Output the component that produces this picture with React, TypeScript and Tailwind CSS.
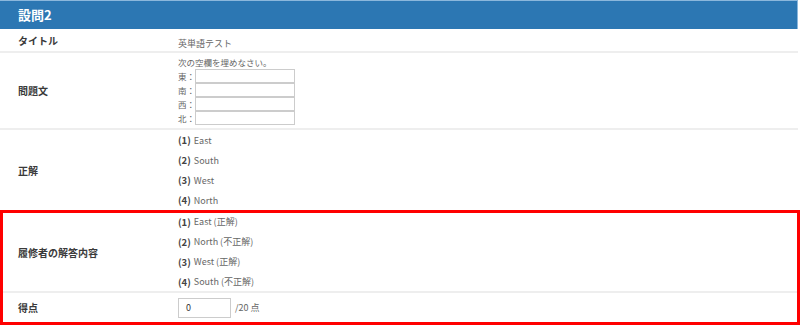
import React from "react";

const font = { fontFamily: '"Noto Sans CJK JP", "Noto Sans", sans-serif' };

function Row({ label, children, className = "", inset = false }: { label: string; children: React.ReactNode; className?: string; inset?: boolean }) {
  return (
    <div className={`flex items-center ${className}`}>
      <div
        className={`${inset ? "w-[175px] pl-[15px]" : "w-[178px] pl-[18px]"} shrink-0 text-[10px] font-bold text-[#3a3a3a]`}
      >
        {label}
      </div>
      <div className="flex-1">{children}</div>
    </div>
  );
}

function Item({ n, text }: { n: number; text: string }) {
  return (
    <div className="flex h-[20px] items-center gap-[3px] text-[9px] text-[#666]">
      <span className="text-[9.5px] font-bold text-[#444]">({n})</span>
      <span>{text}</span>
    </div>
  );
}

export default function App() {
  const blanks = ["東", "南", "西", "北"];
  return (
    <div className="h-[327px] w-[800px] overflow-hidden bg-white" style={font}>
      <div className="w-[798px]">
        <div className="flex h-[29px] items-center border-t border-r border-[#8bb7dc] bg-[#2c77b3] pl-[18px] text-[13px] font-bold text-white">
          設問2
        </div>
        <Row label="タイトル" className="h-[24px] border-b-2 border-[#eeeeee]">
          <span className="text-[9px] text-[#666]">英単語テスト</span>
        </Row>
        <Row label="問題文" className="h-[77px] border-b-2 border-[#eeeeee]">
          <div className="flex flex-col text-[8.5px] text-[#666]">
            <div className="h-[13px] leading-[13px]">次の空欄を埋めなさい。</div>
            {blanks.map((b) => (
              <div key={b} className="flex h-[14px] items-center">
                <span className="w-[17px]">{b}：</span>
                <div className="h-[14px] w-[100px] border border-[#ccc] bg-white" />
              </div>
            ))}
          </div>
        </Row>
        <Row label="正解" className="h-[80px]">
          <div className="pt-px">
            <Item n={1} text="East" />
            <Item n={2} text="South" />
            <Item n={3} text="West" />
            <Item n={4} text="North" />
          </div>
        </Row>
      </div>
      <div className="w-[800px] border-[3px] border-[#ff0000]">
        <Row inset label="履修者の解答内容" className="h-[80px] border-b-2 border-[#eeeeee]">
          <div>
            <Item n={1} text="East (正解)" />
            <Item n={2} text="North (不正解)" />
            <Item n={3} text="West (正解)" />
            <Item n={4} text="South (不正解)" />
          </div>
        </Row>
        <Row inset label="得点" className="h-[29px]">
          <div className="flex items-center gap-[4px] text-[9px] text-[#666]">
            <div className="flex h-[20px] w-[53px] items-center border border-[#ccc] pl-[7px] text-[#333]">0</div>
            <span>/20 点</span>
          </div>
        </Row>
      </div>
    </div>
  );
}
